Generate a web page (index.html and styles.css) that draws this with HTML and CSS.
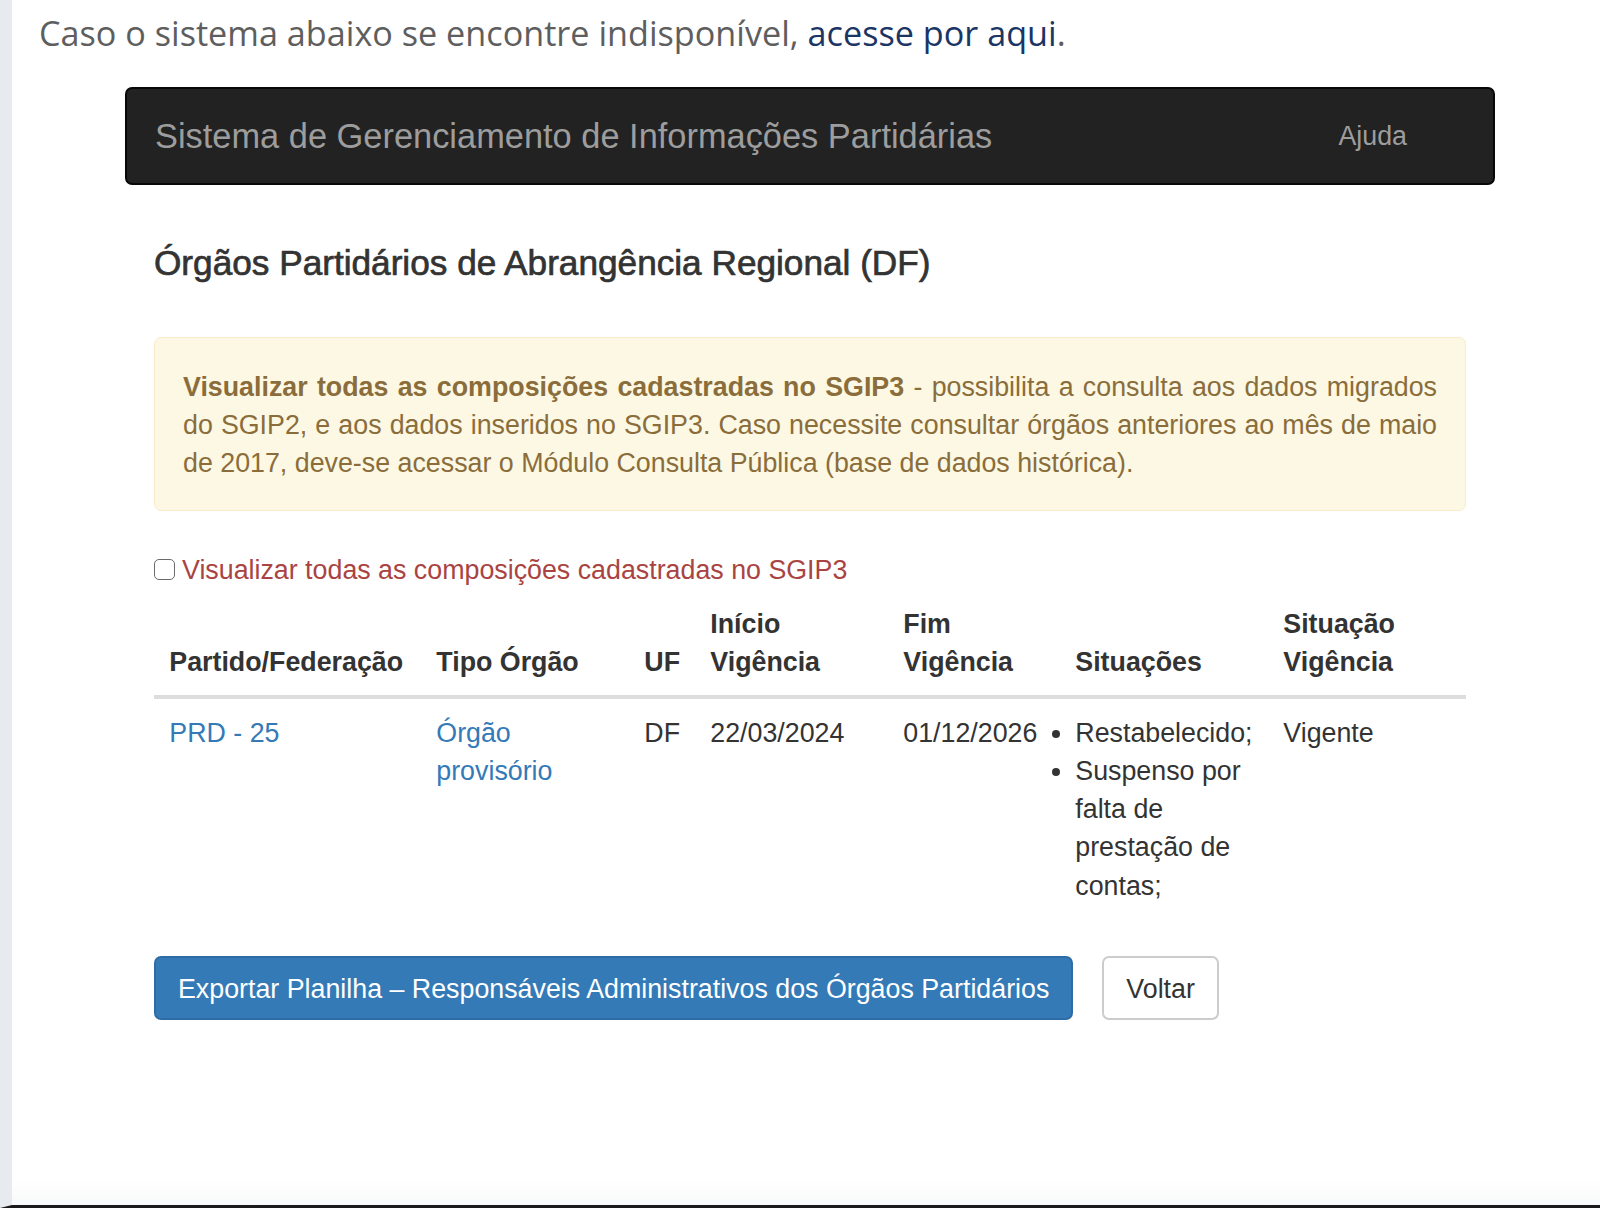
FILE: index.html
```html
<!DOCTYPE html>
<html lang="pt-BR">
<head>
<meta charset="utf-8">
<title>SGIP</title>
<link rel="stylesheet" href="styles.css">
</head>
<body>
<div class="page">
  <p class="notice">Caso o sistema abaixo se encontre indisponível, <a href="#">acesse por aqui</a>.</p>
  <div class="app">
    <nav class="navbar">
      <span class="brand">Sistema de Gerenciamento de Informações Partidárias</span>
      <a class="nav-link" href="#">Ajuda</a>
    </nav>
    <div class="content">
      <h4 class="title">Órgãos Partidários de Abrangência Regional (DF)</h4>
      <div class="alert"><strong>Visualizar todas as composições cadastradas no SGIP3</strong> - possibilita a consulta aos dados migrados do SGIP2, e aos dados inseridos no SGIP3. Caso necessite consultar órgãos anteriores ao mês de maio de 2017, deve-se acessar o Módulo Consulta Pública (base de dados histórica).</div>
      <label class="check"><span class="box"></span>Visualizar todas as composições cadastradas no SGIP3</label>
      <table class="grid">
        <colgroup>
          <col class="c1"><col class="c2"><col class="c3"><col class="c4"><col class="c5"><col class="c6"><col class="c7">
        </colgroup>
        <thead>
          <tr>
            <th>Partido/Federação</th>
            <th>Tipo Órgão</th>
            <th>UF</th>
            <th>Início Vigência</th>
            <th>Fim Vigência</th>
            <th>Situações</th>
            <th>Situação Vigência</th>
          </tr>
        </thead>
        <tbody>
          <tr>
            <td><a href="#">PRD - 25</a></td>
            <td><a href="#">Órgão provisório</a></td>
            <td>DF</td>
            <td>22/03/2024</td>
            <td>01/12/2026</td>
            <td><ul class="sit"><li>Restabelecido;</li><li>Suspenso por falta de prestação de contas;</li></ul></td>
            <td>Vigente</td>
          </tr>
        </tbody>
      </table>
      <div class="actions">
        <button class="btn btn-primary">Exportar Planilha – Responsáveis Administrativos dos Órgãos Partidários</button>
        <button class="btn btn-default">Voltar</button>
      </div>
    </div>
  </div>
</div>
</body>
</html>
```

FILE: styles.css
```css
html, body {
  margin: 0;
  padding: 0;
  height: 100%;
}
body {
  background: #ffffff;
  font-family: "Liberation Sans", Arial, sans-serif;
  color: #333333;
}
.page {
  min-height: 1208px;
  box-sizing: border-box;
  border-left: 12px solid #e7eaef;
  border-bottom: 3px solid #1a1a1a;
  padding-top: 1px;
  background: linear-gradient(#ffffff 1180px, #f8f9fa 1205px);
}
.notice {
  font-family: "Open Sans", sans-serif;
  font-size: 34.2px;
  line-height: 44px;
  color: #5e5e5e;
  margin: 10px 0 0 27px;
}
.notice a {
  color: #1b3565;
  text-decoration: none;
}
.app {
  width: 1370px;
  margin: 32px 0 0 113px;
}
.navbar {
  height: 98px;
  box-sizing: border-box;
  background: #222222;
  border: 2px solid #080808;
  border-radius: 7px;
  display: flex;
  align-items: center;
  justify-content: space-between;
  padding: 0 86px 0 28px;
}
.brand {
  font-size: 34.4px;
  color: #9d9d9d;
}
.nav-link {
  font-size: 26.8px;
  color: #9d9d9d;
  text-decoration: none;
}
.content {
  padding: 0 29px;
  font-size: 26.8px;
  line-height: 38.3px;
}
.title {
  font-size: 35.2px;
  font-weight: 400;
  -webkit-text-stroke: 0.7px #333333;
  line-height: 37.8px;
  margin: 59px 0 55px;
  color: #333333;
}
.alert {
  background: #fcf8e3;
  border: 1.5px solid #faebcc;
  border-radius: 7px;
  color: #8a6d3b;
  padding: 30px 28px 27px;
  text-align: justify;
}
.alert strong {
  font-weight: 700;
}
.check {
  display: flex;
  align-items: center;
  margin-top: 39px;
  color: #a94442;
  height: 40px;
}
.box {
  width: 19px;
  height: 19px;
  border: 1.6px solid #6b6b6b;
  border-radius: 5px;
  margin-right: 7px;
  flex: none;
  background: #fff;
}
.grid {
  width: 100%;
  table-layout: fixed;
  border-collapse: collapse;
  margin-bottom: 36px;
}
.c1 { width: 267px; }
.c2 { width: 208px; }
.c3 { width: 66px; }
.c4 { width: 193px; }
.c5 { width: 172px; }
.c6 { width: 208px; }
.c7 { width: auto; }
.grid th, .grid td {
  padding: 15.3px;
  text-align: left;
  vertical-align: bottom;
}
.grid th {
  font-weight: 700;
  padding-bottom: 13px;
  border-bottom: 4px solid #dddddd;
}
.grid td {
  vertical-align: top;
  padding-top: 15px;
}
.grid a {
  color: #337ab7;
  text-decoration: none;
}
.sit {
  margin: 0;
  padding: 0;
}
.actions {
  display: flex;
  gap: 29px;
}
.btn {
  font-family: "Liberation Sans", Arial, sans-serif;
  font-size: 26.8px;
  line-height: 38.3px;
  padding: 12px 22px;
  border-radius: 7px;
  border: 2px solid;
  height: 64px;
  cursor: pointer;
}
.btn-primary {
  background: #337ab7;
  border-color: #2e6da4;
  color: #ffffff;
}
.btn-default {
  background: #ffffff;
  border-color: #cccccc;
  color: #333333;
}
```
